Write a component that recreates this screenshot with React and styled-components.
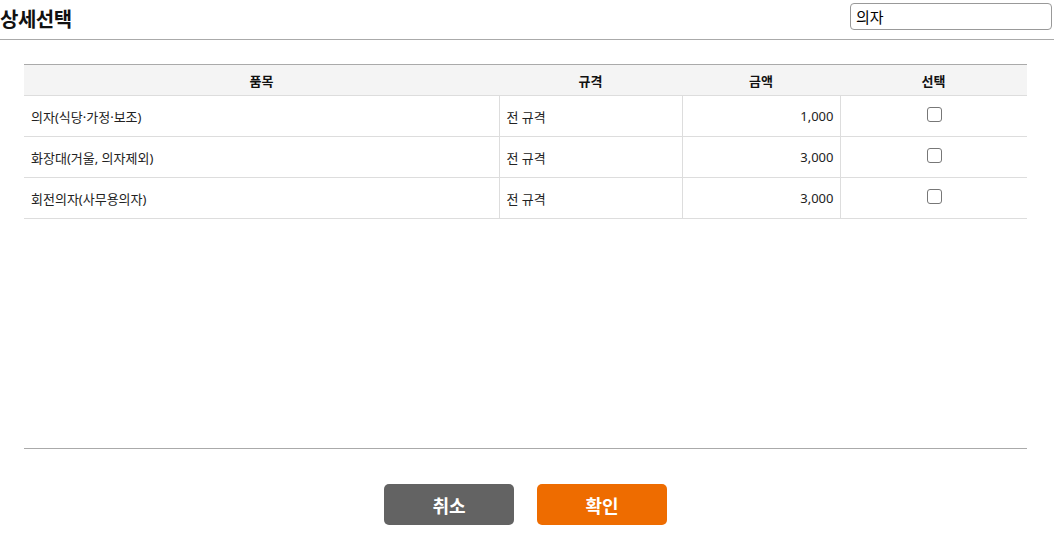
import React from 'react';
import styled, { createGlobalStyle } from 'styled-components';

const GlobalStyle = createGlobalStyle`
  html, body {
    margin: 0;
    padding: 0;
    background: #fff;
    font-family: "Noto Sans CJK KR", "Noto Sans", sans-serif;
    color: #222;
  }
`;

const items = [
  { name: '의자(식당·가정·보조)', spec: '전 규격', price: '1,000' },
  { name: '화장대(거울, 의자제외)', spec: '전 규격', price: '3,000' },
  { name: '회전의자(사무용의자)', spec: '전 규격', price: '3,000' },
];

export default function App() {
  return (
    <Page>
      <GlobalStyle />
      <Header>
        <Title>상세선택</Title>
        <Search defaultValue="의자" />
      </Header>
      <Content>
        <TableArea>
          <Table>
            <colgroup>
              <col style={{ width: 475 }} />
              <col style={{ width: 183 }} />
              <col style={{ width: 158 }} />
              <col />
            </colgroup>
            <thead>
              <tr>
                <Th>품목</Th>
                <Th>규격</Th>
                <Th>금액</Th>
                <Th>선택</Th>
              </tr>
            </thead>
            <tbody>
              {items.map((it, i) => (
                <tr key={i}>
                  <Td>{it.name}</Td>
                  <Td $divider>{it.spec}</Td>
                  <Td $divider $align="right">{it.price}</Td>
                  <Td $divider $align="center">
                    <Check type="checkbox" />
                  </Td>
                </tr>
              ))}
            </tbody>
          </Table>
        </TableArea>
        <Buttons>
          <Button $color="#636363">취소</Button>
          <Button $color="#ee6c00">확인</Button>
        </Buttons>
      </Content>
    </Page>
  );
}

const Page = styled.div`
  width: 1054px;
`;

const Header = styled.div`
  display: flex;
  justify-content: space-between;
  align-items: flex-start;
  height: 39px;
  border-bottom: 1px solid #aaa;
`;

const Title = styled.h1`
  margin: 0;
  padding-top: 5px;
  font-size: 20px;
  font-weight: 700;
  line-height: 28px;
  color: #111;
  letter-spacing: -0.5px;
`;

const Search = styled.input`
  margin: 3px 2px 0 0;
  box-sizing: border-box;
  width: 202px;
  height: 27px;
  padding: 0 5px;
  border: 1px solid #999;
  border-radius: 4px;
  font-family: "Noto Sans CJK KR", sans-serif;
  font-size: 15px;
  color: #000;
  outline: none;
`;

const Content = styled.div`
  padding: 24px 27px 0 24px;
`;

const TableArea = styled.div`
  box-sizing: border-box;
  height: 385px;
  border-top: 1px solid #aaa;
  border-bottom: 1px solid #aaa;
`;

const Table = styled.table`
  width: 100%;
  border-collapse: collapse;
  table-layout: fixed;
  font-size: 13px;
`;

const Th = styled.th`
  height: 30px;
  padding: 0;
  background: #f4f4f4;
  border-bottom: 1px solid #ddd;
  font-size: 13px;
  font-weight: 700;
  color: #111;
  text-align: center;
`;

const Td = styled.td`
  height: 40px;
  padding: 0 6px 0 7px;
  border-bottom: 1px solid #ddd;
  border-left: ${(p) => (p.$divider ? '1px solid #ddd' : 'none')};
  text-align: ${(p) => p.$align || 'left'};
  font-family: "Noto Sans", "Noto Sans CJK KR", sans-serif;
  color: #222;
  white-space: nowrap;
`;

const Check = styled.input`
  appearance: none;
  display: block;
  box-sizing: border-box;
  width: 15px;
  height: 15px;
  margin: 0 auto 4px;
  border: 1px solid #777;
  border-radius: 3px;
  background: #fff;
  cursor: pointer;
  &:checked {
    background: #0075ff;
    border-color: #0075ff;
  }
`;

const Buttons = styled.div`
  display: flex;
  justify-content: center;
  gap: 23px;
  margin-top: 35px;
`;

const Button = styled.button`
  width: 130px;
  height: 41px;
  border: none;
  border-radius: 5px;
  background: ${(p) => p.$color};
  color: #fff;
  font-family: "Noto Sans CJK KR", sans-serif;
  font-size: 18px;
  font-weight: 700;
  cursor: pointer;
`;
